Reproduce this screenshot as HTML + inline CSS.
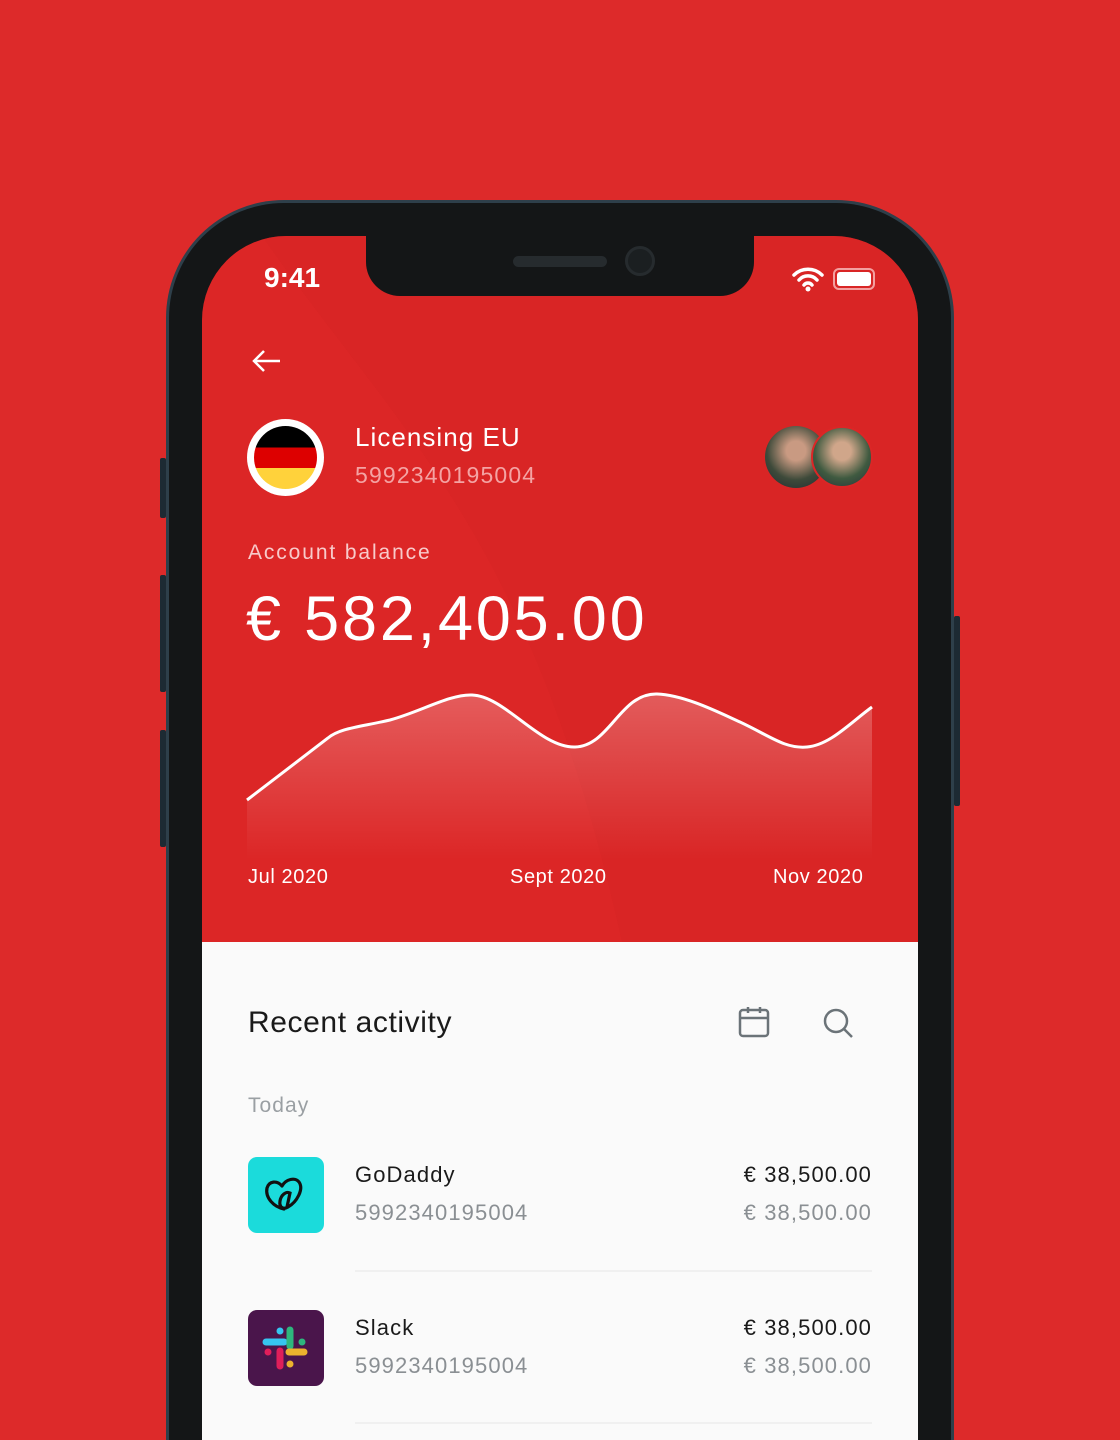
<!DOCTYPE html>
<html><head><meta charset="utf-8"><style>
*{margin:0;padding:0;box-sizing:border-box}
html,body{width:1120px;height:1440px;overflow:hidden}
body{background:#dd2a2a;font-family:"Liberation Sans",sans-serif}
#w{position:relative;width:1120px;height:1440px;overflow:hidden}
.frame{position:absolute;left:166px;top:200px;width:788px;height:1240px;border-radius:118px 118px 0 0;background:#141617;border:3px solid #2e3f4a;border-bottom:none}
.btn{position:absolute;background:#1d2a33;width:6px;border-radius:2px}
.screen{position:absolute;left:202px;top:236px;width:716px;height:1204px;border-radius:84px 84px 0 0;overflow:hidden;background:#dc2626}
.notch{position:absolute;left:366px;top:230px;width:388px;height:66px;background:#141617;border-radius:0 0 34px 34px}
.t{position:absolute;color:#fff;white-space:nowrap;letter-spacing:.05em}
.white{position:absolute;left:0;top:706px;width:716px;height:498px;background:#fafafa}
.d{position:absolute;white-space:nowrap;letter-spacing:.05em}
</style></head><body><div id="w">
<div class="btn" style="left:160px;top:458px;height:60px"></div>
<div class="btn" style="left:160px;top:575px;height:117px"></div>
<div class="btn" style="left:160px;top:730px;height:117px"></div>
<div class="btn" style="left:954px;top:616px;height:190px"></div>
<div class="frame"></div>
<div class="screen">
 <svg style="position:absolute;left:0;top:0" width="716" height="706"><path d="M60 0 C200 200 330 300 420 706 L716 706 L716 0Z" fill="#d62424" opacity=".5"/></svg>
 <div class="white"></div>
</div>
<div class="notch"></div>
<div style="position:absolute;left:513px;top:256px;width:94px;height:11px;border-radius:6px;background:#262b2e"></div>
<div style="position:absolute;left:625px;top:246px;width:30px;height:30px;border-radius:50%;background:#1b1f21;border:3px solid #262b2e"></div>
<div class="t" style="left:264px;top:262px;font-size:28px;font-weight:bold;letter-spacing:0">9:41</div>
<svg style="position:absolute;left:792px;top:266px" width="32" height="26" viewBox="0 0 32 26"><path d="M2 9a20 20 0 0 1 28 0M7 14a12 12 0 0 1 18 0M12 19a5 5 0 0 1 8 0" stroke="#fff" stroke-width="3.5" fill="none" stroke-linecap="round"/><circle cx="16" cy="23" r="2.5" fill="#fff"/></svg>
<div style="position:absolute;left:833px;top:268px;width:42px;height:22px;border:2px solid #f3a0a0;border-radius:6px;padding:2px"><div style="width:100%;height:100%;background:#fff;border-radius:3px"></div></div>
<svg style="position:absolute;left:250px;top:348px" width="34" height="26"><path d="M30 13H4M14 3 4 13l10 10" stroke="#fff" stroke-width="2.5" fill="none"/></svg>
<div style="position:absolute;left:247px;top:419px;width:77px;height:77px;border-radius:50%;background:#fff;padding:7px"><div style="width:100%;height:100%;border-radius:50%;overflow:hidden;background:linear-gradient(#000 0 34%,#dd0000 34% 67%,#ffd23b 67%)"></div></div>
<div class="t" style="left:355px;top:422px;font-size:26px;letter-spacing:.04em">Licensing EU</div>
<div class="t" style="left:355px;top:462px;font-size:23px;color:#f4a3a3">5992340195004</div>
<div style="position:absolute;left:765px;top:426px;width:62px;height:62px;border-radius:50%;background:radial-gradient(circle at 50% 40%,#c99a82 20%,#3e4a3a 60%,#202830)"></div>
<div style="position:absolute;left:811px;top:426px;width:62px;height:62px;border-radius:50%;background:radial-gradient(circle at 50% 40%,#d0a68a 20%,#3f5a40 60%,#243038);border:2px solid #dc2626"></div>
<div class="t" style="left:248px;top:541px;font-size:21px;color:#f8caca;letter-spacing:.09em">Account balance</div>
<div class="t" style="left:246px;top:583px;font-size:63px;letter-spacing:2.8px">€ 582,405.00</div>
<svg style="position:absolute;left:240px;top:680px" width="640" height="180">
<defs><linearGradient id="g" x1="0" y1="0" x2="0" y2="1"><stop offset="0" stop-color="#fff" stop-opacity=".25"/><stop offset="1" stop-color="#fff" stop-opacity="0"/></linearGradient></defs>
<path d="M7 120 L88 58 C100 48 120 47 150 40 C180 32 210 14 232 15 C265 16 300 68 335 67 C370 66 380 13 417 14 C445 15 480 33 500 42 C530 56 545 69 567 67 C590 65 610 43 632 27 L632 180 L7 180Z" fill="url(#g)"/>
<path d="M7 120 L88 58 C100 48 120 47 150 40 C180 32 210 14 232 15 C265 16 300 68 335 67 C370 66 380 13 417 14 C445 15 480 33 500 42 C530 56 545 69 567 67 C590 65 610 43 632 27" stroke="#fff" stroke-width="3" fill="none"/>
</svg>
<div class="t" style="left:248px;top:866px;font-size:20px;letter-spacing:.03em">Jul 2020</div>
<div class="t" style="left:510px;top:866px;font-size:20px;letter-spacing:.03em">Sept 2020</div>
<div class="t" style="left:773px;top:866px;font-size:20px;letter-spacing:.03em">Nov 2020</div>
<div class="d" style="left:248px;top:1006px;font-size:30px;color:#1a1a1a;letter-spacing:.02em">Recent activity</div>
<svg style="position:absolute;left:737px;top:1005px" width="34" height="34" viewBox="0 0 34 34"><rect x="3" y="5" width="28" height="26" rx="3" stroke="#6b7378" stroke-width="2.5" fill="none"/><path d="M3 13h28M11 2v6M23 2v6" stroke="#6b7378" stroke-width="2.5"/></svg>
<svg style="position:absolute;left:821px;top:1006px" width="34" height="34" viewBox="0 0 34 34"><circle cx="15" cy="15" r="11" stroke="#6b7378" stroke-width="2.5" fill="none"/><path d="M23 23l8 8" stroke="#6b7378" stroke-width="2.5"/></svg>
<div class="d" style="left:248px;top:1094px;font-size:21px;color:#9a9fa3">Today</div>
<div style="position:absolute;left:248px;top:1157px;width:76px;height:76px;border-radius:9px;background:#1bdbdb"></div>
<svg style="position:absolute;left:262px;top:1171px" width="48" height="48" viewBox="0 0 48 48"><path d="M22 38C12 36 3 27 5 17c2-7 10-8 15-2M20 15c4-7 13-9 17-4 5 7-2 20-11 25-5 3-9 0-8-6 1-6 6-10 10-8l-3 14" stroke="#111" stroke-width="3.2" fill="none" stroke-linecap="round"/></svg>
<div class="d" style="left:355px;top:1162px;font-size:22px;color:#1a1a1a">GoDaddy</div>
<div class="d" style="left:355px;top:1200px;font-size:22px;color:#8a8f93">5992340195004</div>
<div class="d" style="right:248px;top:1162px;font-size:22px;color:#1a1a1a">€ 38,500.00</div>
<div class="d" style="right:248px;top:1200px;font-size:22px;color:#8a8f93">€ 38,500.00</div>
<div style="position:absolute;left:355px;top:1270px;width:517px;height:2px;background:#f0f0f0"></div>
<div style="position:absolute;left:248px;top:1310px;width:76px;height:76px;border-radius:9px;background:#4a154b"></div>
<svg style="position:absolute;left:262px;top:1324px" width="48" height="48" viewBox="0 0 48 48" stroke-linecap="round" stroke-width="7">
<path d="M4 18h18" stroke="#36c5f0"/><path d="M18 7v0" stroke="#36c5f0"/>
<path d="M28 6v16" stroke="#2eb67d"/><path d="M40 18h0" stroke="#2eb67d"/>
<path d="M6 28h0" stroke="#e01e5a"/><path d="M18 27v15" stroke="#e01e5a"/>
<path d="M27 28h15" stroke="#ecb22e"/><path d="M28 40h0" stroke="#ecb22e"/>
</svg>
<div class="d" style="left:355px;top:1315px;font-size:22px;color:#1a1a1a">Slack</div>
<div class="d" style="left:355px;top:1353px;font-size:22px;color:#8a8f93">5992340195004</div>
<div class="d" style="right:248px;top:1315px;font-size:22px;color:#1a1a1a">€ 38,500.00</div>
<div class="d" style="right:248px;top:1353px;font-size:22px;color:#8a8f93">€ 38,500.00</div>
<div style="position:absolute;left:355px;top:1422px;width:517px;height:2px;background:#f0f0f0"></div>
</div></body></html>
